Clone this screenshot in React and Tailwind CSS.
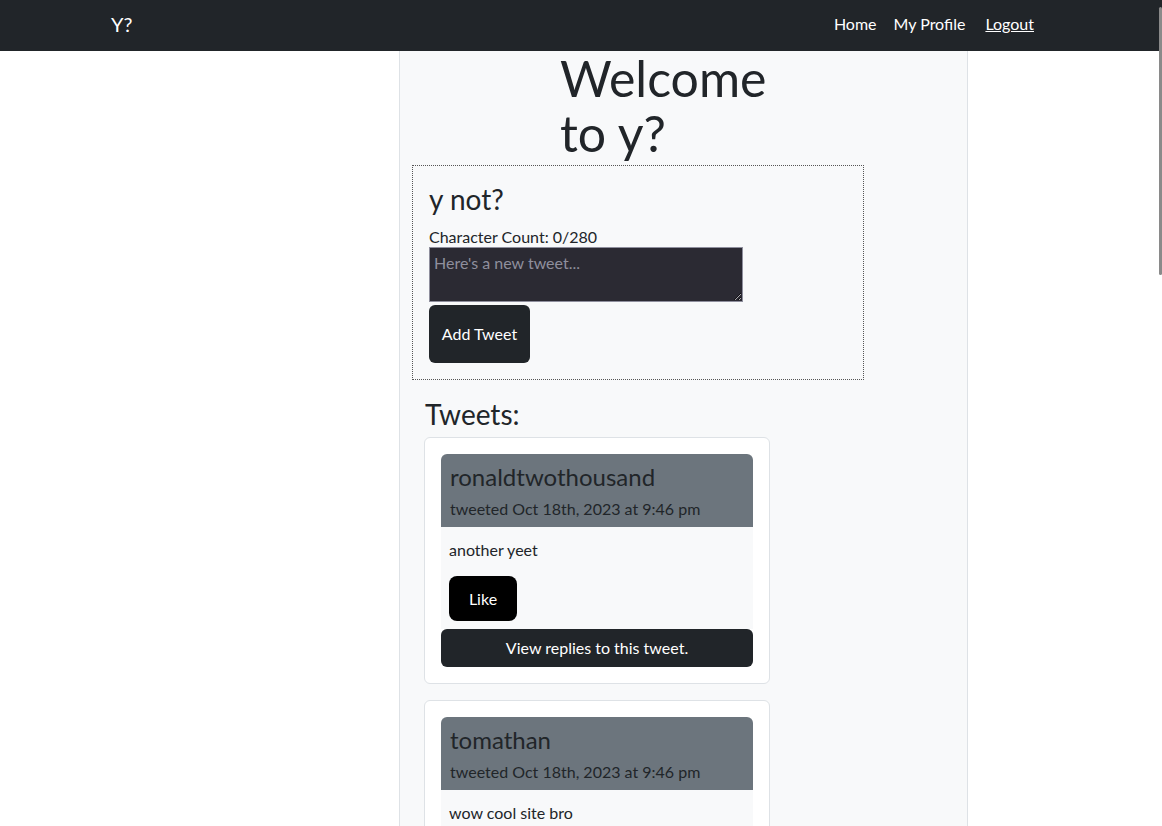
import React from "react";

function TweetCard({ user, date, text, showActions }) {
  return (
    <div className="ml-[24px] w-[346px] border border-[#dee2e6] rounded-[6px] bg-white p-4">
      <div className="w-[312px] bg-[#6c757d] rounded-t-[6px] px-[9px] pt-[8px] pb-[6px] text-[#212529]">
        <div className="text-[24px] leading-[29px]">{user}</div>
        <div className="text-[16px] leading-[24px] mt-[6px]">{date}</div>
      </div>
      <div className="w-[312px] bg-[#f8f9fa] px-[8px] pt-[11px] pb-[8px] text-[#212529]">
        <div className="text-[16px] leading-[24px]">{text}</div>
        {showActions && (
          <button className="mt-[14px] w-[68px] h-[45px] bg-black text-white rounded-[8px] text-[16px]">
            Like
          </button>
        )}
      </div>
      {showActions && (
        <button className="w-[312px] h-[38px] bg-[#212529] text-white rounded-[6px] text-[16px] block">
          View replies to this tweet.
        </button>
      )}
    </div>
  );
}

export default function App() {
  return (
    <div
      className="relative h-[826px] overflow-hidden bg-white text-[#212529]"
      style={{ fontFamily: "Lato, 'Noto Sans', sans-serif" }}
    >
      <nav className="h-[51px] bg-[#212529] flex items-center pl-[111px] pr-[128px] pb-[3px]">
        <span className="text-white text-[20px] leading-[30px]">Y?</span>
        <div className="ml-auto flex items-center text-white text-[16px]">
          <a className="mr-[17px]">Home</a>
          <a className="mr-[20px]">My Profile</a>
          <a className="underline">Logout</a>
        </div>
      </nav>

      <main className="ml-[399px] w-[569px] h-[775px] border-l border-r border-[#dee2e6] bg-[#f8f9fa]">
        <h1 className="ml-[160px] w-[240px] text-[50px] leading-[55px]">
          Welcome to y?
        </h1>

        <div className="mt-[4px] ml-[12px] w-[452px] h-[215px] border border-dotted border-[#555] px-[16px] pt-[16px]">
          <h3 className="text-[28px] leading-[34px]">y not?</h3>
          <div className="text-[16px] leading-[20px] mt-[11px]">Character Count: 0/280</div>
          <textarea
            className="block w-[314px] h-[55px] bg-[#2b2a33] border border-[#8f8f9d] text-white text-[16px] px-[4px] py-[3px] placeholder:text-[#8f8f9d] outline-none"
            placeholder="Here's a new tweet..."
          />
          <button className="mt-[3px] w-[101px] h-[58px] bg-[#212529] text-white rounded-[6px] text-[16px]">
            Add Tweet
          </button>
        </div>

        <div className="ml-[25px] mt-[17px] text-[28px] leading-[34px]">Tweets:</div>
        <div className="mt-[6px] flex flex-col gap-4">
          <TweetCard
            user="ronaldtwothousand"
            date="tweeted Oct 18th, 2023 at 9:46 pm"
            text="another yeet"
            showActions
          />
          <TweetCard
            user="tomathan"
            date="tweeted Oct 18th, 2023 at 9:46 pm"
            text="wow cool site bro"
          />
        </div>
      </main>

      <div className="absolute right-0 top-[7px] w-[3px] h-[268px] bg-[#8a8a8a] rounded-sm" />
    </div>
  );
}
